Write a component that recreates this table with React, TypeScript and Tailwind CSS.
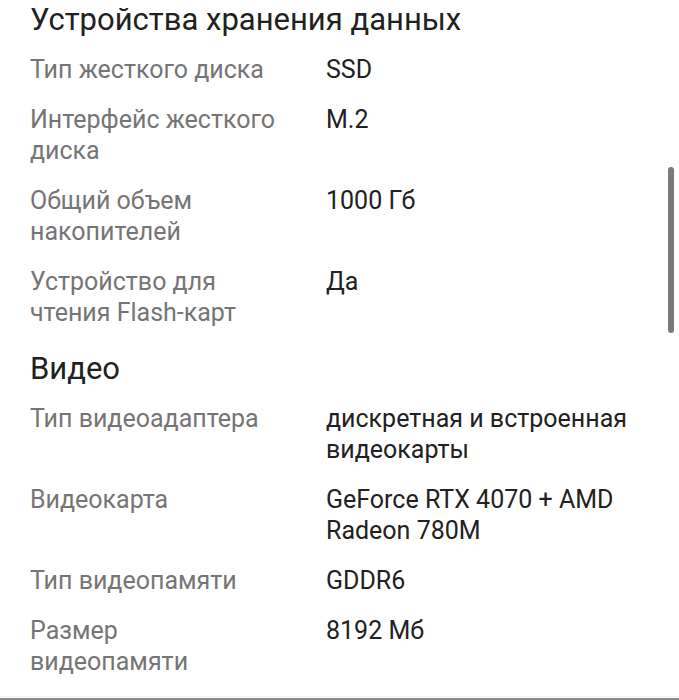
import React from "react";

type Row = { label: string; value: string };

const storage: Row[] = [
  { label: "Тип жесткого диска", value: "SSD" },
  { label: "Интерфейс жесткого диска", value: "M.2" },
  { label: "Общий объем накопителей", value: "1000 Гб" },
  { label: "Устройство для чтения Flash-карт", value: "Да" },
];

const video: Row[] = [
  { label: "Тип видеоадаптера", value: "дискретная и встроенная видеокарты" },
  { label: "Видеокарта", value: "GeForce RTX 4070 + AMD Radeon 780M" },
  { label: "Тип видеопамяти", value: "GDDR6" },
  { label: "Размер видеопамяти", value: "8192 Мб" },
];

function Section({ title, rows, first }: { title: string; rows: Row[]; first?: boolean }) {
  return (
    <section className={first ? "" : "mt-[4px]"}>
      <h2 className="text-[31px] leading-[36px] text-[#212121] font-normal mb-[16px]">{title}</h2>
      <div className="flex flex-col gap-[19px]">
        {rows.map((r) => (
          <div key={r.label} className="flex gap-[46px] text-[25px] leading-[31px]">
            <div className="w-[250px] shrink-0 text-[#757575]">{r.label}</div>
            <div className="flex-1 text-[#212121]">{r.value}</div>
          </div>
        ))}
      </div>
    </section>
  );
}

export default function App() {
  return (
    <div
      className="relative h-[700px] w-[679px] overflow-hidden bg-white flex flex-col"
      style={{ fontFamily: "Roboto, 'Noto Sans', sans-serif" }}
    >
      <div className="pl-[30px] pr-[30px] pt-[2px] flex flex-col gap-[19px]">
        <Section title="Устройства хранения данных" rows={storage} first />
        <Section title="Видео" rows={video} />
      </div>
      <div className="mt-auto h-[2px] border-t border-[#eeeeee] bg-white" />
      <div className="h-[2px] bg-[#8a8a8a]" />
      <div className="absolute right-[5px] top-[167px] h-[166px] w-[6px] rounded-full bg-[#7a7a7a]" />
    </div>
  );
}
